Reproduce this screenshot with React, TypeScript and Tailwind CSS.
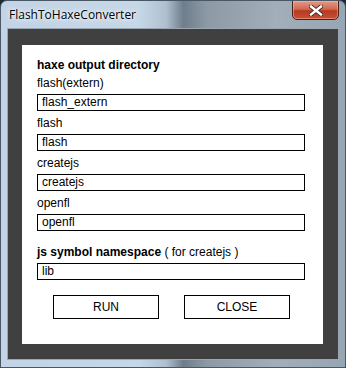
const fields = [
  { label: 'flash(extern)', value: 'flash_extern' },
  { label: 'flash', value: 'flash' },
  { label: 'createjs', value: 'createjs' },
  { label: 'openfl', value: 'openfl' },
];

const CloseIcon = () => (
  <svg width="14" height="11" viewBox="0 0 14 11">
    <path
      d="M2 1.5 L12 9.5 M12 1.5 L2 9.5"
      stroke="#3b2a28"
      strokeWidth="4.2"
      strokeLinecap="square"
      fill="none"
    />
    <path
      d="M2 1.5 L12 9.5 M12 1.5 L2 9.5"
      stroke="#ffffff"
      strokeWidth="2.4"
      strokeLinecap="square"
      fill="none"
    />
  </svg>
);

const Field = ({ label, value }: { label: string; value: string }) => (
  <div className="flex flex-col">
    <div className="h-[16px] leading-[16px]">{label}</div>
    <div className="mt-[3px] h-[17px] border border-black pl-[4px] leading-[15px]">{value}</div>
  </div>
);

const App = () => {
  return (
    <div className="w-[346px] h-[368px] bg-[#1f2a36] font-['Liberation_Sans',Arial,sans-serif] text-[12px] text-black">
      <div className="flex flex-col w-full h-full rounded-t-[7px] border border-[#4a5866] bg-[linear-gradient(90deg,#c2d4e5_0%,#c6d7e7_40%,#aebfcf_48%,#6f7e8c_53%,#8d9aa6_60%,#a2aeb9_80%,#97a6b4_100%)] overflow-hidden">
        {/* title bar */}
        <div className="relative flex h-[27px] shrink-0 items-center pl-[8px]">
          <span className="font-['Open_Sans',sans-serif] text-[12px] text-black [text-shadow:0_0_6px_#fff,0_0_3px_#fff]">
            FlashToHaxeConverter
          </span>
          <div className="absolute right-[6px] top-[-1px] flex h-[20px] w-[47px] items-center justify-center rounded-b-[5px] border border-[#4d2119] bg-[linear-gradient(180deg,#e39a86_0%,#d06a52_45%,#b83a20_55%,#c65234_100%)] shadow-[inset_0_0_0_1px_rgba(255,200,180,0.45)]">
            <CloseIcon />
          </div>
        </div>

        {/* client area */}
        <div className="mx-[6px] flex flex-1 flex-col border border-[#9aa6b1] bg-[#404040] pt-[16px] pl-[14px] pr-[15px] pb-[15px]">
          <div className="flex flex-1 flex-col bg-white pl-[15px] pr-[18px] pt-[12px]">
            <div className="h-[16px] font-bold leading-[16px]">haxe output directory</div>
            <div className="mt-[2px] flex flex-col gap-[4px]">
              {fields.map((f) => (
                <Field key={f.label} label={f.label} value={f.value} />
              ))}
            </div>
            <div className="mt-[13px] h-[16px] leading-[16px]">
              <span className="font-bold">js symbol namespace</span> ( for createjs )
            </div>
            <div className="mt-[3px] h-[17px] border border-black pl-[4px] leading-[15px]">lib</div>
            <div className="mt-[15px] flex gap-[25px] pl-[16px]">
              <button className="h-[24px] w-[106px] border border-black bg-white text-[12px]">RUN</button>
              <button className="h-[24px] w-[106px] border border-black bg-white text-[12px]">CLOSE</button>
            </div>
          </div>
        </div>
        <div className="h-[7px] shrink-0" />
      </div>
    </div>
  );
};

export default App;
